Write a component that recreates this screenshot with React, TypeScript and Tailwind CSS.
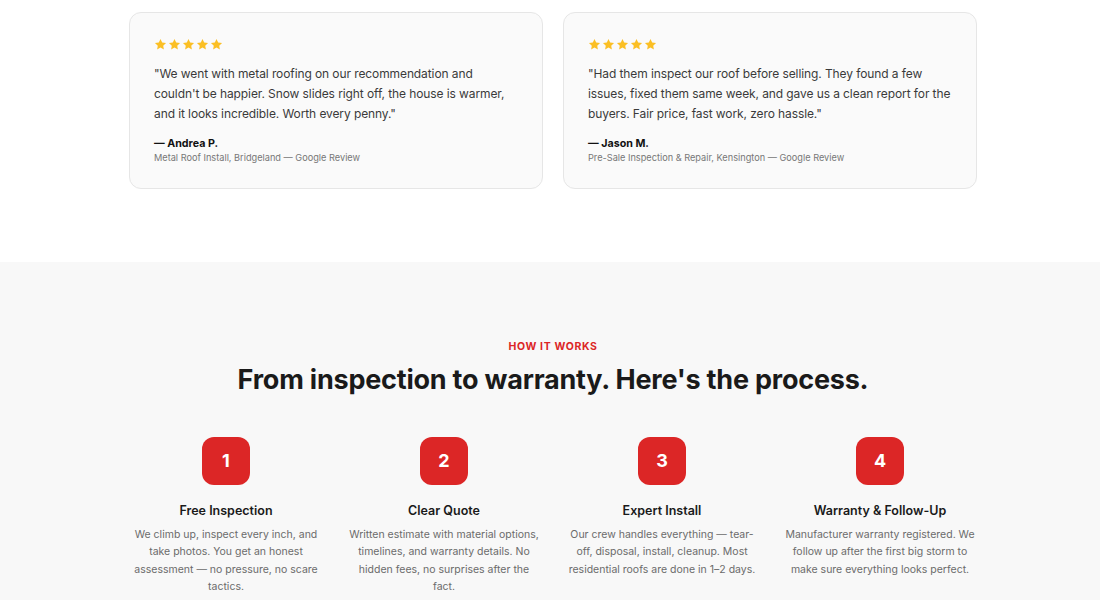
import React from 'react';

interface Review {
  quote: string;
  name: string;
  meta: string;
}

interface Step {
  n: number;
  title: string;
  body: string;
}

const reviews: Review[] = [
  {
    quote:
      '"We went with metal roofing on our recommendation and couldn\'t be happier. Snow slides right off, the house is warmer, and it looks incredible. Worth every penny."',
    name: '— Andrea P.',
    meta: 'Metal Roof Install, Bridgeland — Google Review',
  },
  {
    quote:
      '"Had them inspect our roof before selling. They found a few issues, fixed them same week, and gave us a clean report for the buyers. Fair price, fast work, zero hassle."',
    name: '— Jason M.',
    meta: 'Pre-Sale Inspection & Repair, Kensington — Google Review',
  },
];

const steps: Step[] = [
  {
    n: 1,
    title: 'Free Inspection',
    body: 'We climb up, inspect every inch, and take photos. You get an honest assessment — no pressure, no scare tactics.',
  },
  {
    n: 2,
    title: 'Clear Quote',
    body: 'Written estimate with material options, timelines, and warranty details. No hidden fees, no surprises after the fact.',
  },
  {
    n: 3,
    title: 'Expert Install',
    body: 'Our crew handles everything — tear-off, disposal, install, cleanup. Most residential roofs are done in 1–2 days.',
  },
  {
    n: 4,
    title: 'Warranty & Follow-Up',
    body: 'Manufacturer warranty registered. We follow up after the first big storm to make sure everything looks perfect.',
  },
];

const Star = () => (
  <svg viewBox="0 0 20 20" className="w-[13px] h-[13px]" fill="#fbbf24">
    <path d="M10 1.5l2.6 5.4 5.9.8-4.3 4.1 1 5.8L10 14.8l-5.2 2.8 1-5.8L1.5 7.7l5.9-.8z" />
  </svg>
);

const ReviewCard: React.FC<{ review: Review }> = ({ review }) => (
  <div className="bg-[#fafafa] border border-[#e6e6e6] rounded-xl px-6 pt-[25px] pb-[23px]">
    <div className="flex gap-[1px] mb-[13px]">
      {[0, 1, 2, 3, 4].map((i) => (
        <Star key={i} />
      ))}
    </div>
    <p className="text-[12px] leading-[20px] tracking-[-0.008em] text-[#3a3a3a]">{review.quote}</p>
    <p className="mt-[13px] text-[10.7px] leading-[14px] font-bold text-[#111]">{review.name}</p>
    <p className="text-[9.2px] leading-[14px] text-[#777]">{review.meta}</p>
  </div>
);

export default function App() {
  return (
    <div className="font-['Inter',sans-serif] bg-white pl-[6px]">
      <section className="pt-3 pb-[73px]">
        <div className="max-w-4xl mx-auto px-6 grid grid-cols-2 gap-5">
          {reviews.map((r) => (
            <ReviewCard key={r.name} review={r} />
          ))}
        </div>
      </section>

      <section className="bg-[#f8f8f8] pt-[77px] pb-10 -ml-[6px] pl-[6px]">
        <div className="max-w-4xl mx-auto px-6">
          <p className="text-center text-[10.5px] font-bold tracking-[0.06em] text-[#dc2626]">HOW IT WORKS</p>
          <h2 className="mt-[7px] text-center text-[27px] leading-[36px] font-bold tracking-[-0.008em] text-[#1a1a1a]">
            From inspection to warranty. Here's the process.
          </h2>
          <div className="mt-[39px] grid grid-cols-4 gap-6">
            {steps.map((s) => (
              <div key={s.n} className="flex flex-col items-center text-center">
                <div className="w-12 h-12 rounded-xl bg-[#dc2626] flex items-center justify-center text-white text-[18px] font-bold">
                  {s.n}
                </div>
                <h3 className="mt-[17px] text-[12.5px] font-semibold text-[#1a1a1a]">{s.title}</h3>
                <p className="mt-[5px] text-[10.5px] leading-[17.5px] text-[#6b6b6b]">{s.body}</p>
              </div>
            ))}
          </div>
        </div>
      </section>
    </div>
  );
}
